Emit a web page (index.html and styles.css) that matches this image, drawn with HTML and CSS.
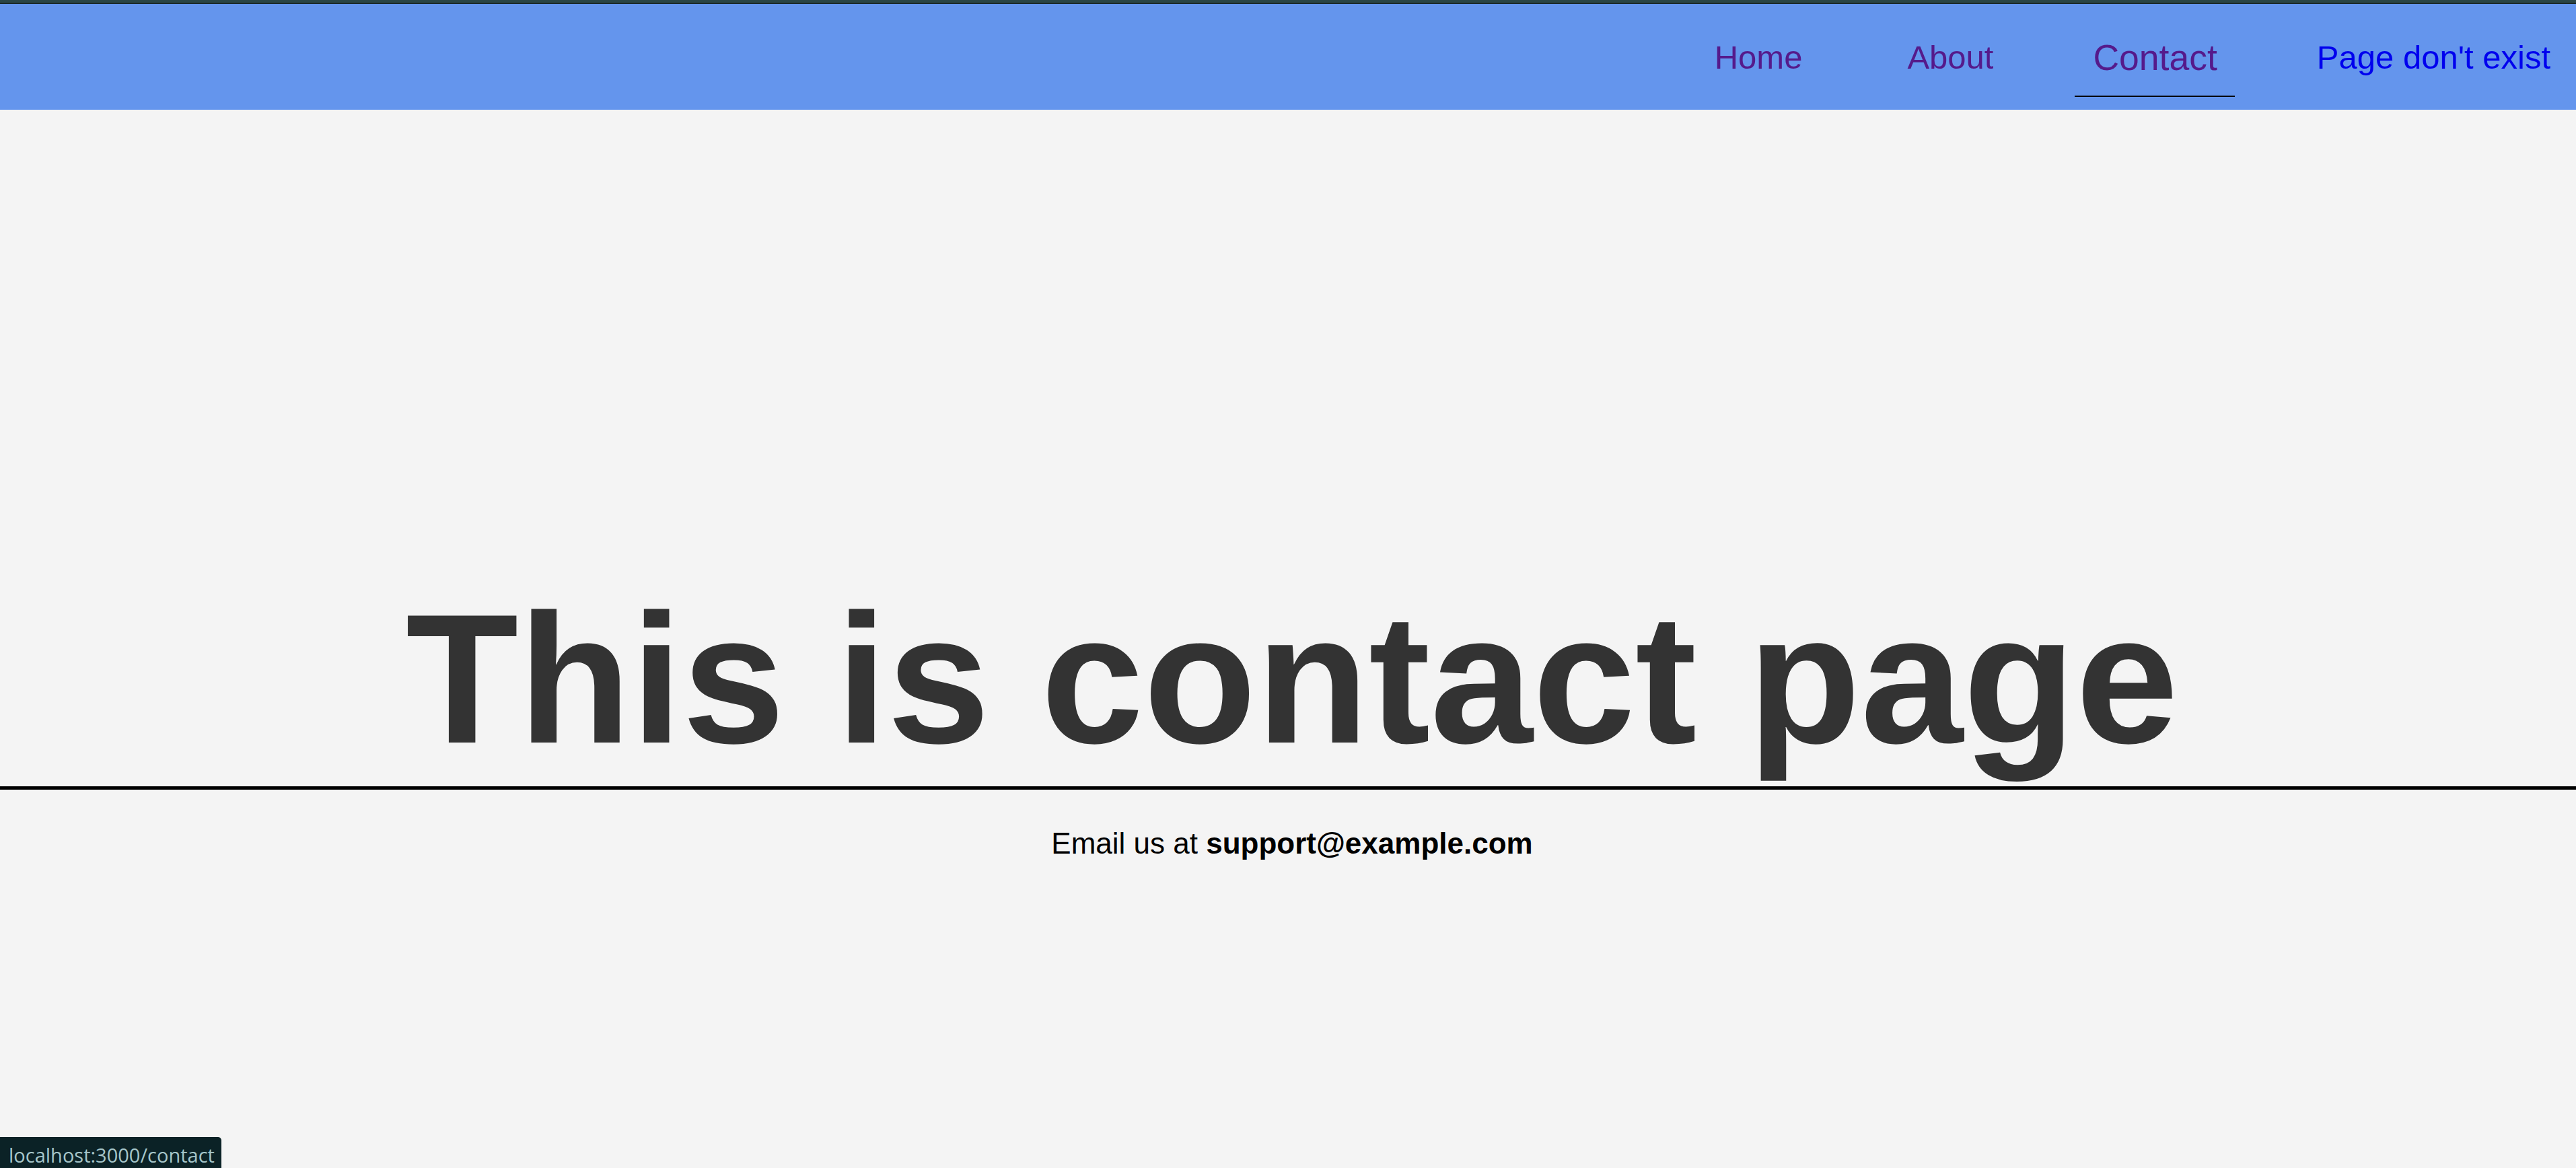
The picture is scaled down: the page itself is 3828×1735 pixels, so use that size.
FILE: index.html
```html
<!DOCTYPE html>
<html lang="en">
<head>
<meta charset="utf-8">
<title>Contact</title>
<link rel="stylesheet" href="styles.css">
</head>
<body>
<div class="topstrip"></div>
<nav class="navbar">
  <a class="nav-link visited" href="#home">Home</a>
  <a class="nav-link visited" href="#about">About</a>
  <a class="nav-link visited active" href="#contact">Contact</a>
  <a class="nav-link fresh" href="#missing">Page don't exist</a>
</nav>
<main class="content">
  <h1 class="title">This is contact page</h1>
  <div class="rule"></div>
  <p class="email">Email us at <strong>support@example.com</strong></p>
</main>
<div class="status">localhost:3000/contact</div>
</body>
</html>
```

FILE: styles.css
```css
html, body {
  margin: 0;
  padding: 0;
}
body {
  background: #f4f4f4;
  font-family: "Liberation Sans", Arial, sans-serif;
  min-height: 1735px;
  overflow: hidden;
}
.topstrip {
  height: 4px;
  background: #2a4545;
  border-bottom: 2px solid #1c2b2b;
}
.navbar {
  height: 157px;
  background: #6495ed;
  display: flex;
  justify-content: flex-end;
  align-items: center;
  gap: 156px;
  padding: 2px 38px 0 0;
  box-sizing: border-box;
}
.nav-link {
  font-size: 49px;
  text-decoration: none;
  position: relative;
  line-height: 1.15;
}
.nav-link.visited {
  color: #551a8b;
}
.nav-link.fresh {
  color: #0000ee;
}
.nav-link.active {
  font-size: 53.5px;
  margin: 0 -8px;
}
.nav-link.active::after {
  content: "";
  position: absolute;
  left: -27px;
  right: -26px;
  bottom: -28px;
  height: 2px;
  background: #000;
}
.content {
  padding: 688px 0 0 12px;
  text-align: center;
}
.title {
  margin: 0;
  font-size: 274px;
  font-weight: bold;
  color: #333333;
  line-height: normal;
}
.rule {
  height: 5px;
  background: #000;
  margin: 2px 0 0 -12px;
}
.email {
  margin: 55px 0 0;
  font-size: 44px;
  color: #000;
  line-height: normal;
}
.email strong {
  font-weight: bold;
}
.status {
  position: fixed;
  left: 0;
  bottom: 0;
  height: 46px;
  width: 329px;
  box-sizing: border-box;
  padding: 8px 0 0 13px;
  background: #0b2226;
  color: #a6c6ca;
  border-top-right-radius: 5px;
  font-family: "Open Sans", "Noto Sans", sans-serif;
  font-size: 29px;
  line-height: 38px;
  white-space: nowrap;
}
```
